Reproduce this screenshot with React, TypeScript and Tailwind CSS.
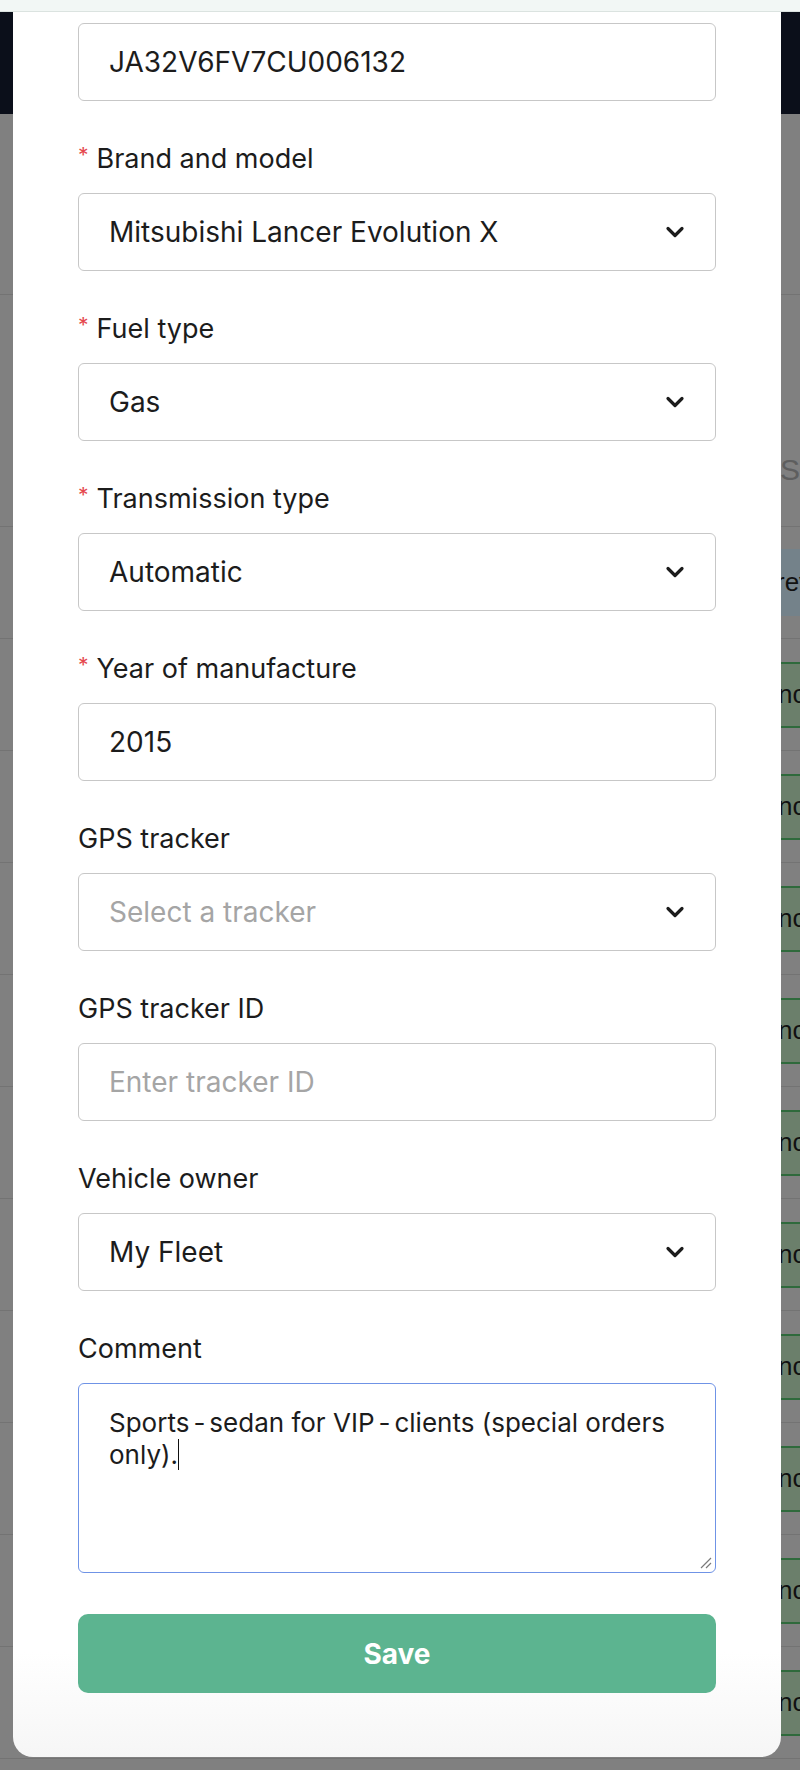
import React from "react";

const Chevron = () => (
  <svg width="20" height="12" viewBox="0 0 20 12" fill="none" className="shrink-0">
    <path d="M3 2.5 L10 9.5 L17 2.5" stroke="#1c1c1c" strokeWidth="3.2" strokeLinecap="round" strokeLinejoin="round" />
  </svg>
);

const Label = ({ required, children }: { required?: boolean; children: React.ReactNode }) => (
  <div className="h-[42px] flex items-center text-[27px] leading-[42px] text-[#1c1c1c]">
    {required && <span className="text-[#e5484d] text-[21px] leading-none mr-[8px] -translate-y-[4px]">*</span>}
    <span>{children}</span>
  </div>
);

const Control = ({ value, placeholder, select, first }: { value?: string; placeholder?: string; select?: boolean; first?: boolean }) => (
  <div className={(first ? "" : "mt-[13px] ") + "h-[78px] border-[1.5px] border-[#c7c7c7] rounded-[6px] px-[30px] flex items-center justify-between bg-white"}>
    <span className={value ? "text-[28px] text-[#1c1c1c]" : "text-[28px] text-[#a5a5a5]"}>{value ?? placeholder}</span>
    {select && <Chevron />}
  </div>
);

const Field = ({ label, required, value, placeholder, select }: { label: string; required?: boolean; value?: string; placeholder?: string; select?: boolean }) => (
  <div className="mt-[37px]">
    <Label required={required}>{label}</Label>
    <Control value={value} placeholder={placeholder} select={select} />
  </div>
);

const Row = ({ kind }: { kind: "green" | "blue" | "none" }) => (
  <div className="h-[112px] border-b border-[#737373] flex items-center justify-end">
    {kind === "green" && (
      <div className="w-[19px] h-[66px] overflow-hidden bg-[#6b7f6b] border-y-2 border-[#2f6a3c] flex items-center">
        <span className="text-[26px] text-[#111] whitespace-nowrap -ml-[3px] font-['Liberation_Sans',sans-serif]">nce</span>
      </div>
    )}
    {kind === "blue" && (
      <div className="w-[19px] h-[67px] overflow-hidden bg-[#74828a] flex items-center">
        <span className="text-[26px] text-[#111] whitespace-nowrap -ml-[5px] font-['Liberation_Sans',sans-serif]">rev</span>
      </div>
    )}
  </div>
);

export default function App() {
  return (
    <div className="w-[800px] h-[1770px] overflow-hidden bg-[#808080] font-['Inter',sans-serif]">
      <div className="h-[12px] bg-[#f2f7f5] border-b border-[#dbe3e0]" />
      <div className="relative">
        {/* page underneath the overlay */}
        <div>
          <div className="h-[102px] bg-[#0b0f1a]" />
          <div className="h-[181px] border-b border-[#737373]" />
          <div className="h-[232px] border-b border-[#737373] flex items-end justify-end pb-[40px]">
            <div className="w-[19px] overflow-hidden">
              <span className="text-[30px] text-[#5e5e5e] leading-none font-['Liberation_Sans',sans-serif] -ml-[1px]">S</span>
            </div>
          </div>
          <Row kind="blue" />
          <Row kind="green" />
          <Row kind="green" />
          <Row kind="green" />
          <Row kind="green" />
          <Row kind="green" />
          <Row kind="green" />
          <Row kind="green" />
          <Row kind="green" />
          <Row kind="green" />
          <Row kind="green" />
        </div>

        {/* modal */}
        <div className="absolute left-[13px] top-0 w-[768px] rounded-b-[20px] bg-[linear-gradient(to_bottom,#ffffff_94%,#f6f6f6)] px-[65px] pt-[11px] pb-[64px]">
          <Control value="JA32V6FV7CU006132" first />
          <Field label="Brand and model" required value="Mitsubishi Lancer Evolution X" select />
          <Field label="Fuel type" required value="Gas" select />
          <Field label="Transmission type" required value="Automatic" select />
          <Field label="Year of manufacture" required value="2015" />
          <Field label="GPS tracker" placeholder="Select a tracker" select />
          <Field label="GPS tracker ID" placeholder="Enter tracker ID" />
          <Field label="Vehicle owner" value="My Fleet" select />
          <div className="mt-[37px]">
            <Label>Comment</Label>
            <div className="relative mt-[13px] h-[190px] border-[1.5px] border-[#6f93e6] rounded-[6px] px-[30px] pt-[23px] bg-white">
              <p className="text-[26px] leading-[32px] text-[#1c1c1c]">
                Sports<span className="mx-[4px]">-</span>sedan for VIP<span className="mx-[4px]">-</span>clients (special orders only).
                <span className="inline-block w-[1.5px] h-[31px] bg-[#111] align-middle -mt-[4px]" />
              </p>
              <svg className="absolute right-[3px] bottom-[3px]" width="13" height="13" viewBox="0 0 13 13">
                <path d="M12 2 L2 12 M12 7 L7 12" stroke="#7a7a7a" strokeWidth="1.2" />
              </svg>
            </div>
          </div>
          <button className="mt-[41px] w-full h-[79px] rounded-[10px] bg-[#5cb490] text-white font-bold text-[28px] flex items-center justify-center">
            Save
          </button>
        </div>
      </div>
    </div>
  );
}
